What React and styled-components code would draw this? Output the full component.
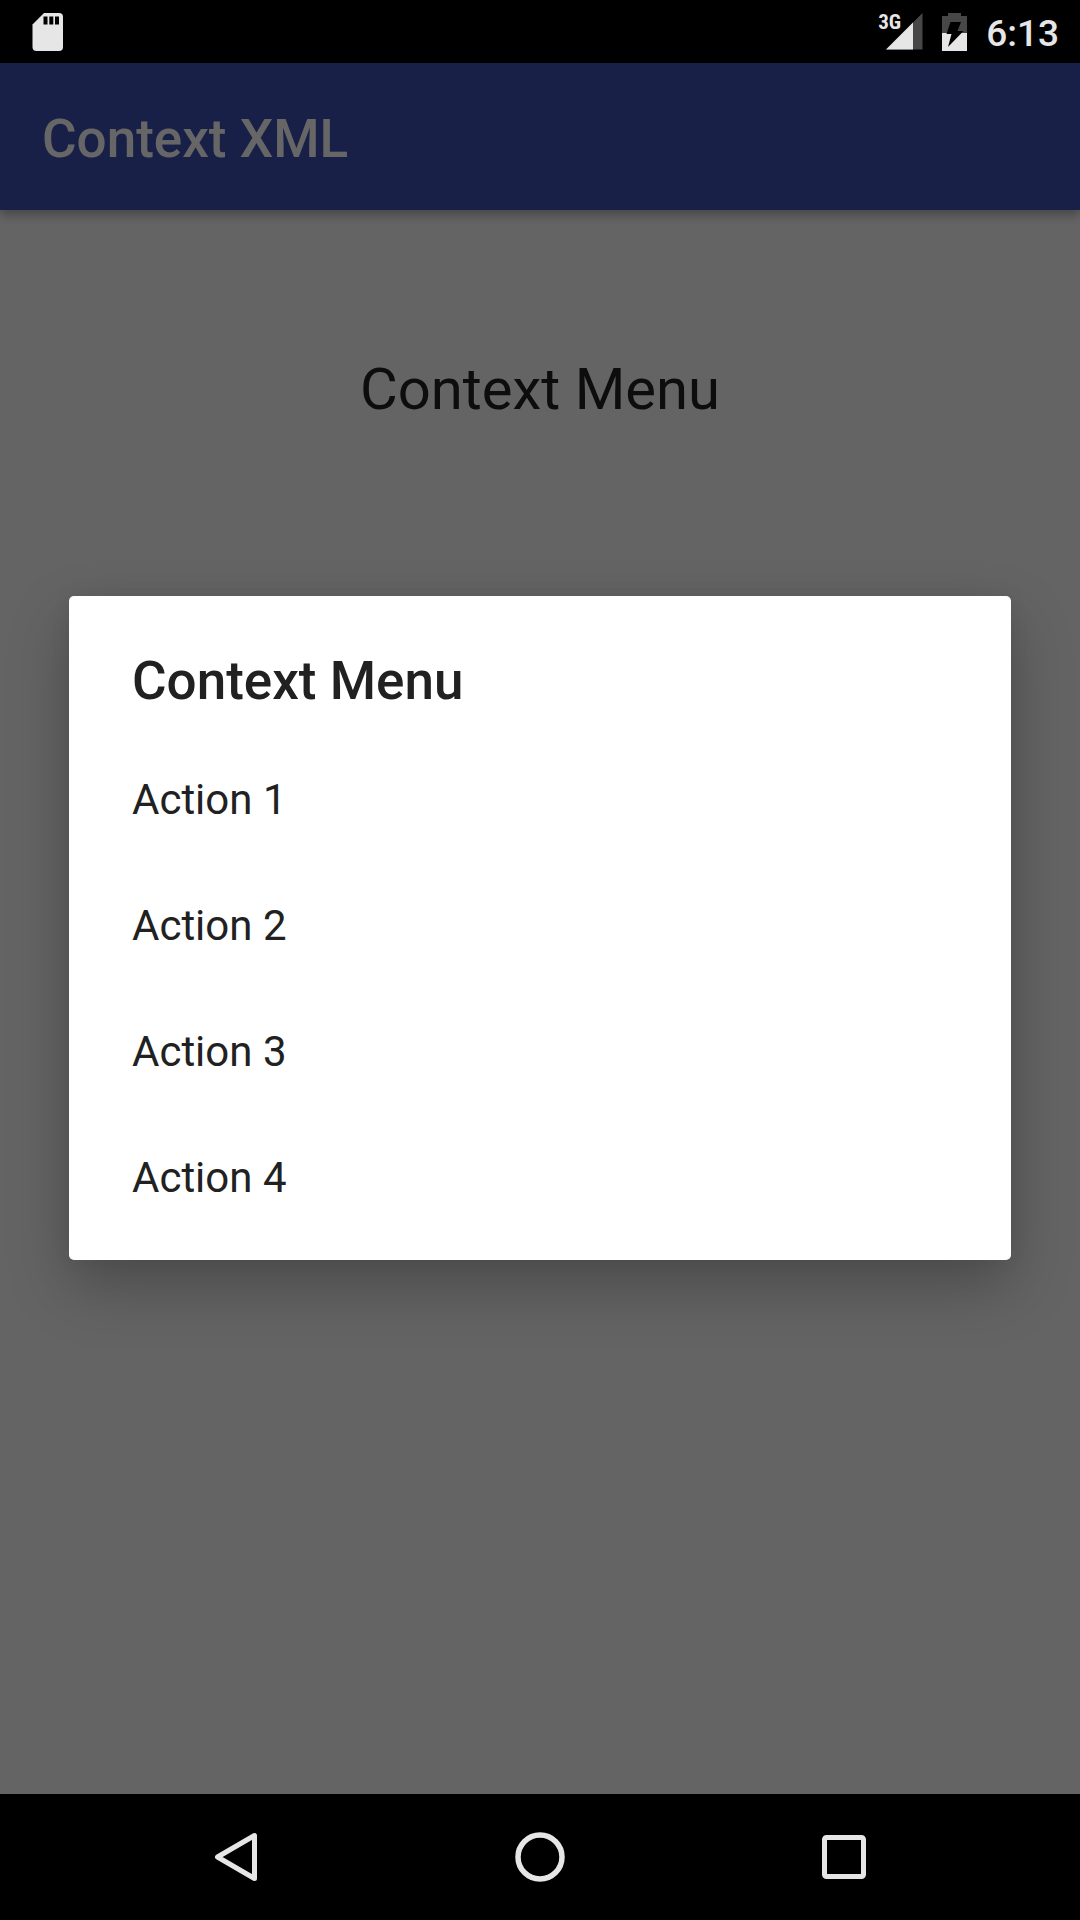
import React from 'react';
import styled, { createGlobalStyle } from 'styled-components';

const GlobalStyle = createGlobalStyle`
  * { box-sizing: border-box; }
  body { margin: 0; background: #000; font-family: Roboto, "Liberation Sans", sans-serif; }
  button { font: inherit; border: 0; margin: 0; background: none; cursor: pointer; }
  h1, h2, p, ul { margin: 0; padding: 0; }
  svg { display: block; }
`;

const Screen = styled.div`
  display: flex;
  flex-direction: column;
  min-height: 100vh;
`;

const StatusBar = styled.header`
  display: flex;
  justify-content: space-between;
  height: 63px;
  padding: 0 21px 0 32px;
  background: #000;
  color: #e6e6e6;
`;

const StatusGroup = styled.div`
  display: flex;
  align-items: center;
  gap: 19px;
`;

const Signal = styled.div`
  position: relative;
  padding-left: 8px;
`;

const NetworkType = styled.span`
  position: absolute;
  left: 0;
  top: -1px;
  font-family: "Roboto Condensed", "Liberation Sans Narrow", Roboto, sans-serif;
  font-size: 21px;
  line-height: 20px;
  font-weight: 700;
`;

const Clock = styled.time`
  padding-top: 4px;
  font-size: 37px;
  line-height: 44px;
  font-weight: 500;
`;

const Activity = styled.div`
  position: relative;
  display: flex;
  flex-direction: column;
  flex: 1;
  background: #fafafa;
`;

const Toolbar = styled.div`
  display: flex;
  align-items: center;
  height: 147px;
  padding: 4px 42px 0;
  background: #3f51b5;
  box-shadow: 0 5px 10px rgba(0, 0, 0, 0.3);
`;

const Title = styled.h1`
  font-size: 53px;
  line-height: 64px;
  font-weight: 500;
  color: ${(p) => p.$color};
`;

const Content = styled.main`
  flex: 1;
  padding-top: 143px;
  text-align: center;
`;

const ContextTarget = styled.p`
  font-size: 58px;
  line-height: 72px;
  color: #212121;
`;

const Scrim = styled.div`
  position: absolute;
  inset: 0;
  display: flex;
  align-items: center;
  justify-content: center;
  padding: 0 69px 1px;
  background: rgba(0, 0, 0, 0.6);
`;

const Dialog = styled.section`
  width: 100%;
  padding: 0 0 19px;
  border-radius: 5px;
  background: #fff;
  box-shadow: 0 26px 60px rgba(0, 0, 0, 0.25), 0 0 20px rgba(0, 0, 0, 0.06);
`;

const DialogHeader = styled.div`
  padding: 53px 63px 24px;
`;

const Actions = styled.ul`
  list-style: none;
`;

const ActionButton = styled.button`
  display: block;
  width: 100%;
  height: 126px;
  padding: 0 63px;
  font-size: 42px;
  line-height: 50px;
  text-align: left;
  color: #212121;
`;

const NavigationBar = styled.nav`
  display: grid;
  grid-template-columns: repeat(3, 1fr);
  height: 126px;
  padding: 0 84px;
  background: #000;
`;

const NavButton = styled.button`
  display: grid;
  place-items: center;
  padding: 0;
  color: #e6e6e6;
`;

function SdCardIcon() {
  return (
    <svg width="32" height="40" viewBox="0 0 32 40" aria-label="SD card">
      <path d="M12 1H27a4 4 0 0 1 4 4V35a4 4 0 0 1-4 4H4.500a4 4 0 0 1-4-4V12.500z" fill="#e6e6e6" />
      <path d="M11.500 4.500h4v8h-4zM17.300 4.500h4v8h-4zM23 4.500h4v8h-4z" fill="#000" />
    </svg>
  );
}

function SignalIcon() {
  return (
    <svg width="37" height="37" viewBox="0 0 37 37" aria-label="Signal">
      <path d="M36.500 0V36.500H0z" fill="#474747" />
      <path d="M27 9.500V36.500H0z" fill="#e6e6e6" />
    </svg>
  );
}

function BatteryIcon() {
  return (
    <svg width="25" height="38" viewBox="0 0 25 38" aria-label="Battery charging">
      <path d="M6 0H19V3H25V20H0V3H6z" fill="#474747" />
      <path d="M0 20H25V38H0z" fill="#e6e6e6" />
      <path d="M8.500 9H19L15.500 18H21.500L6 34L9.500 21H4.500z" fill="#000" />
    </svg>
  );
}

function BackIcon() {
  return (
    <svg width="50" height="50" viewBox="0 0 50 50">
      <path d="M43.500 3.500V46.500L6.500 25z" fill="none" stroke="currentColor" strokeWidth="5" strokeLinejoin="round" />
    </svg>
  );
}

function HomeIcon() {
  return (
    <svg width="50" height="50" viewBox="0 0 50 50">
      <circle cx="25" cy="25" r="22" fill="none" stroke="currentColor" strokeWidth="5.500" />
    </svg>
  );
}

function RecentsIcon() {
  return (
    <svg width="50" height="50" viewBox="0 0 50 50">
      <rect x="5.500" y="5.500" width="39" height="39" rx="2" fill="none" stroke="currentColor" strokeWidth="5" />
    </svg>
  );
}

const actions = ['Action 1', 'Action 2', 'Action 3', 'Action 4'];

export default function App() {
  return (
    <>
      <GlobalStyle />
      <Screen>
        <StatusBar>
          <StatusGroup>
            <SdCardIcon />
          </StatusGroup>
          <StatusGroup>
            <Signal>
              <NetworkType>3G</NetworkType>
              <SignalIcon />
            </Signal>
            <BatteryIcon />
            <Clock>6:13</Clock>
          </StatusGroup>
        </StatusBar>
        <Activity>
          <Toolbar>
            <Title $color="#fff">Context XML</Title>
          </Toolbar>
          <Content>
            <ContextTarget>Context Menu</ContextTarget>
          </Content>
          <Scrim>
            <Dialog role="dialog" aria-labelledby="menu-title">
              <DialogHeader>
                <Title as="h2" id="menu-title" $color="#212121">Context Menu</Title>
              </DialogHeader>
              <Actions>
                {actions.map((label) => (
                  <li key={label}>
                    <ActionButton type="button">{label}</ActionButton>
                  </li>
                ))}
              </Actions>
            </Dialog>
          </Scrim>
        </Activity>
        <NavigationBar>
          <NavButton type="button" aria-label="Back"><BackIcon /></NavButton>
          <NavButton type="button" aria-label="Home"><HomeIcon /></NavButton>
          <NavButton type="button" aria-label="Recents"><RecentsIcon /></NavButton>
        </NavigationBar>
      </Screen>
    </>
  );
}
